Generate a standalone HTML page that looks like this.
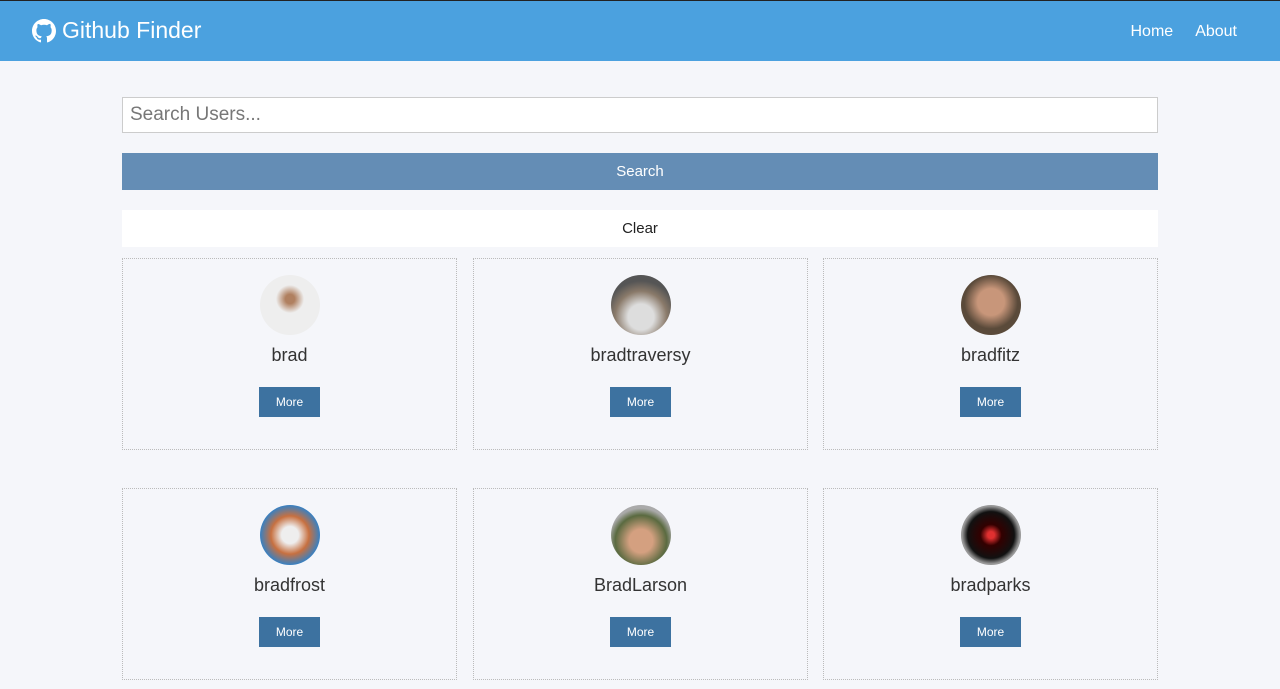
<!DOCTYPE html>
<html><head><style>
body{margin:0;background:#f5f6fa;font-family:"Liberation Sans",sans-serif;width:1280px;height:689px;overflow:hidden;position:relative}
.nav{position:absolute;top:0;left:0;width:1280px;height:61px;background:#4ba1df;border-top:1px solid #222;box-sizing:border-box}
.logo{position:absolute;left:32px;top:16px;color:#fff;font-size:23px;display:flex;align-items:center;gap:6px}
.links{position:absolute;right:43px;top:22px;color:#fff;font-size:16px}
.links span{margin-left:22px}
.input{position:absolute;left:122px;top:97px;width:1036px;height:36px;border:1px solid #ccc;background:#fff;box-sizing:border-box;font-size:19px;color:#777;padding:6px 7px}
.btn{position:absolute;left:122px;width:1036px;height:37px;text-align:center;line-height:37px;font-size:15px}
.card{position:absolute;width:335px;height:192px;border:1px dotted #bbb;box-sizing:border-box;text-align:center}
.av{width:60px;height:60px;border-radius:50%;margin:16px auto 0}
.nm{font-size:18px;color:#333;margin-top:10px;height:22px}
.more{display:inline-block;margin-top:20px;background:#3d72a0;color:#fff;font-size:12px;width:61px;height:30px;line-height:30px}
</style></head><body>
<div class="nav"><div class="logo"><svg width="24" height="24" viewBox="0 0 16 16" fill="#fff"><path d="M8 0C3.58 0 0 3.58 0 8c0 3.54 2.29 6.53 5.47 7.59.4.07.55-.17.55-.38 0-.19-.01-.82-.01-1.49-2.01.37-2.53-.49-2.69-.94-.09-.23-.48-.94-.82-1.13-.28-.15-.68-.52-.01-.53.63-.01 1.08.58 1.23.82.72 1.21 1.87.87 2.33.66.07-.52.28-.87.51-1.07-1.78-.2-3.64-.89-3.64-3.95 0-.87.31-1.59.82-2.15-.08-.2-.36-1.02.08-2.12 0 0 .67-.21 2.2.82.64-.18 1.32-.27 2-.27.68 0 1.36.09 2 .27 1.53-1.04 2.2-.82 2.2-.82.44 1.1.16 1.92.08 2.12.51.56.82 1.27.82 2.15 0 3.07-1.87 3.75-3.65 3.95.29.25.54.73.54 1.48 0 1.07-.01 1.93-.01 2.2 0 .21.15.46.55.38A8.013 8.013 0 0016 8c0-4.42-3.58-8-8-8z"/></svg>Github Finder</div>
<div class="links"><span>Home</span><span>About</span></div></div>
<div class="input">Search Users...</div>
<div class="btn" style="top:153px;background:#648db5;color:#fff">Search</div>
<div class="btn" style="top:210px;background:#fff;color:#222">Clear</div>

<div class="card" style="left:122px;top:258px"><div class="av" style="background:radial-gradient(circle at 50% 40%,#b08060 10%,#eee 30%)"></div><div class="nm">brad</div><span class="more">More</span></div>
<div class="card" style="left:473px;top:258px"><div class="av" style="background:radial-gradient(circle at 50% 70%,#ddd 25%,#8a7a6a 50%,#555 70%)"></div><div class="nm">bradtraversy</div><span class="more">More</span></div>
<div class="card" style="left:823px;top:258px"><div class="av" style="background:radial-gradient(circle at 50% 45%,#c8967a 30%,#5a4a3a 60%)"></div><div class="nm">bradfitz</div><span class="more">More</span></div>
<div class="card" style="left:122px;top:488px"><div class="av" style="background:radial-gradient(circle at 50% 50%,#eee 20%,#c77040 45%,#3a80c0 70%)"></div><div class="nm">bradfrost</div><span class="more">More</span></div>
<div class="card" style="left:473px;top:488px"><div class="av" style="background:radial-gradient(circle at 50% 60%,#d4a080 25%,#5a6a40 55%,#aaa 70%)"></div><div class="nm">BradLarson</div><span class="more">More</span></div>
<div class="card" style="left:823px;top:488px"><div class="av" style="background:radial-gradient(circle at 50% 50%,#e03030 8%,#300 25%,#111 55%,#999 68%)"></div><div class="nm">bradparks</div><span class="more">More</span></div>
</body></html>
